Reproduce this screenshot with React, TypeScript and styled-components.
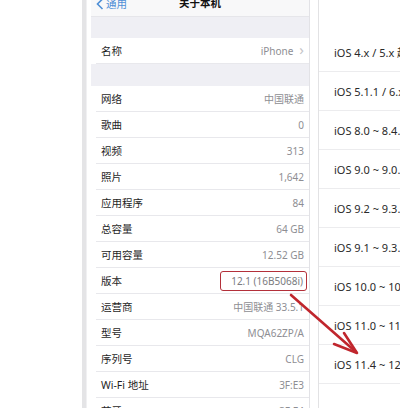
import React from 'react'
import styled, { createGlobalStyle } from 'styled-components'

const GlobalStyle = createGlobalStyle`
    body {
        margin: 0;
        background: #ffffff;
        font-family: "Noto Sans", "Noto Sans CJK SC", sans-serif;
    }
`

interface IRow {
    label: string
    value: string
    chevron?: boolean
    marked?: boolean
}

const nameRow: IRow = {label: '名称', value: 'iPhone', chevron: true}

const infoRows: IRow[] = [
    {label: '网络', value: '中国联通'},
    {label: '歌曲', value: '0'},
    {label: '视频', value: '313'},
    {label: '照片', value: '1,642'},
    {label: '应用程序', value: '84'},
    {label: '总容量', value: '64 GB'},
    {label: '可用容量', value: '12.52 GB'},
    {label: '版本', value: '12.1 (16B5068i)', marked: true},
    {label: '运营商', value: '中国联通 33.5.1'},
    {label: '型号', value: 'MQA62ZP/A'},
    {label: '序列号', value: 'CLG'},
    {label: 'Wi-Fi 地址', value: '3F:E3'},
    {label: '蓝牙', value: '3F:E4'},
]

const versions = [
    'iOS 4.x / 5.x 越狱',
    'iOS 5.1.1 / 6.x 越狱',
    'iOS 8.0 ~ 8.4.1 越狱',
    'iOS 9.0 ~ 9.0.2 越狱',
    'iOS 9.2 ~ 9.3.3 越狱',
    'iOS 9.1 ~ 9.3.5 越狱',
    'iOS 10.0 ~ 10.3.3 越狱',
    'iOS 11.0 ~ 11.1.2 越狱',
    'iOS 11.4 ~ 12.x 越狱',
]

const SettingsRow: React.FC<{ row: IRow }> = ({row}) => {
    return (
        <Row>
            <RowInner>
                <Label>{row.label}</Label>
                <Value marked={row.marked}>{row.value}</Value>
                {row.chevron && <Chevron>›</Chevron>}
            </RowInner>
        </Row>
    )
}

const App: React.FC = () => {
    return (
        <>
            <GlobalStyle />
            <Page>
                <Margin />
                <Bezel />
                <Screen>
                    <NavBar>
                        <Back>
                            <svg width="8" height="12" viewBox="0 0 8 12">
                                <path d="M6.5 1 L1.5 6 L6.5 11" fill="none" stroke="#4f8fd6" strokeWidth="1.6" />
                            </svg>
                            通用
                        </Back>
                        <Title>关于本机</Title>
                    </NavBar>
                    <Gap height={21} />
                    <SettingsRow row={nameRow} />
                    <Gap height={22} />
                    {infoRows.map(row => <SettingsRow key={row.label} row={row} />)}
                </Screen>
                <Divider />
                <VersionList>
                    {versions.map(v => <VersionRow key={v}>{v}</VersionRow>)}
                </VersionList>
                <Arrow width="400" height="408" viewBox="0 0 400 408">
                    <path d="M291 295 L356 352" stroke="#c0262d" strokeWidth="2.6" strokeLinecap="round" />
                    <path d="M344 333 L357 353 L334 344" fill="none" stroke="#c0262d" strokeWidth="2.6" strokeLinecap="round" strokeLinejoin="round" />
                </Arrow>
            </Page>
        </>
    )
}

export default App

const Page = styled.div`
    position: relative;
    display: flex;
    width: 400px;
    height: 408px;
    overflow: hidden;
    background: #ffffff;
`

const Margin = styled.div`
    width: 82px;
    flex-shrink: 0;
`

const Bezel = styled.div`
    width: 4px;
    margin-right: 4px;
    flex-shrink: 0;
    background: #e4e4e6;
    border-right: 1px solid #f0f0f2;
`

const Screen = styled.div`
    width: 218px;
    flex-shrink: 0;
    display: flex;
    flex-direction: column;
    background: #efeff4;
    border-right: 1px solid #e2e2e6;
`

const NavBar = styled.div`
    height: 16px;
    flex-shrink: 0;
    display: flex;
    align-items: center;
    position: relative;
    overflow: hidden;
    background: #f8f8f9;
    border-bottom: 1px solid #e6e6ea;
`

const Back = styled.div`
    display: flex;
    align-items: center;
    gap: 2px;
    margin-top: -9px;
    padding-left: 5px;
    font-size: 10.5px;
    color: #4f8fd6;
`

const Title = styled.div`
    position: absolute;
    left: 0;
    right: 0;
    top: -5px;
    text-align: center;
    font-size: 10.5px;
    font-weight: 700;
    color: #111111;
`

const Gap = styled.div<{ height: number }>`
    height: ${p => p.height}px;
    flex-shrink: 0;
`

const Row = styled.div`
    height: 26px;
    flex-shrink: 0;
    padding-left: 5px;
    background: #ffffff;
`

const RowInner = styled.div`
    height: 25px;
    display: flex;
    align-items: center;
    padding: 0 5px;
    border-bottom: 1px solid #e8e8ec;
`

const Label = styled.div`
    flex: 1;
    font-size: 10.5px;
    color: #1f1f1f;
`

const Value = styled.div<{ marked?: boolean }>`
    font-size: 10px;
    color: #8e8e93;
    ${p => p.marked && `
        padding: 2px 3px 2px 10px;
        margin-right: -3px;
        border: 1.6px solid #b3303a;
        border-radius: 3px;
        color: #7b7b80;
    `}
`

const Chevron = styled.div`
    margin-left: 6px;
    font-size: 15px;
    line-height: 1;
    margin-top: -2px;
    color: #c4c4c8;
`

const Divider = styled.div`
    width: 8px;
    flex-shrink: 0;
    border-right: 1px solid #e2e2e4;
`

const VersionList = styled.div`
    flex: 1;
    padding-top: 33px;
    min-width: 0;
`

const VersionRow = styled.div`
    height: 38px;
    display: flex;
    align-items: center;
    padding-left: 15px;
    font-size: 11px;
    color: #2a2a2a;
    white-space: nowrap;
    border-bottom: 1px solid #ececee;
`

const Arrow = styled.svg`
    position: absolute;
    left: 0;
    top: 0;
    pointer-events: none;
`
